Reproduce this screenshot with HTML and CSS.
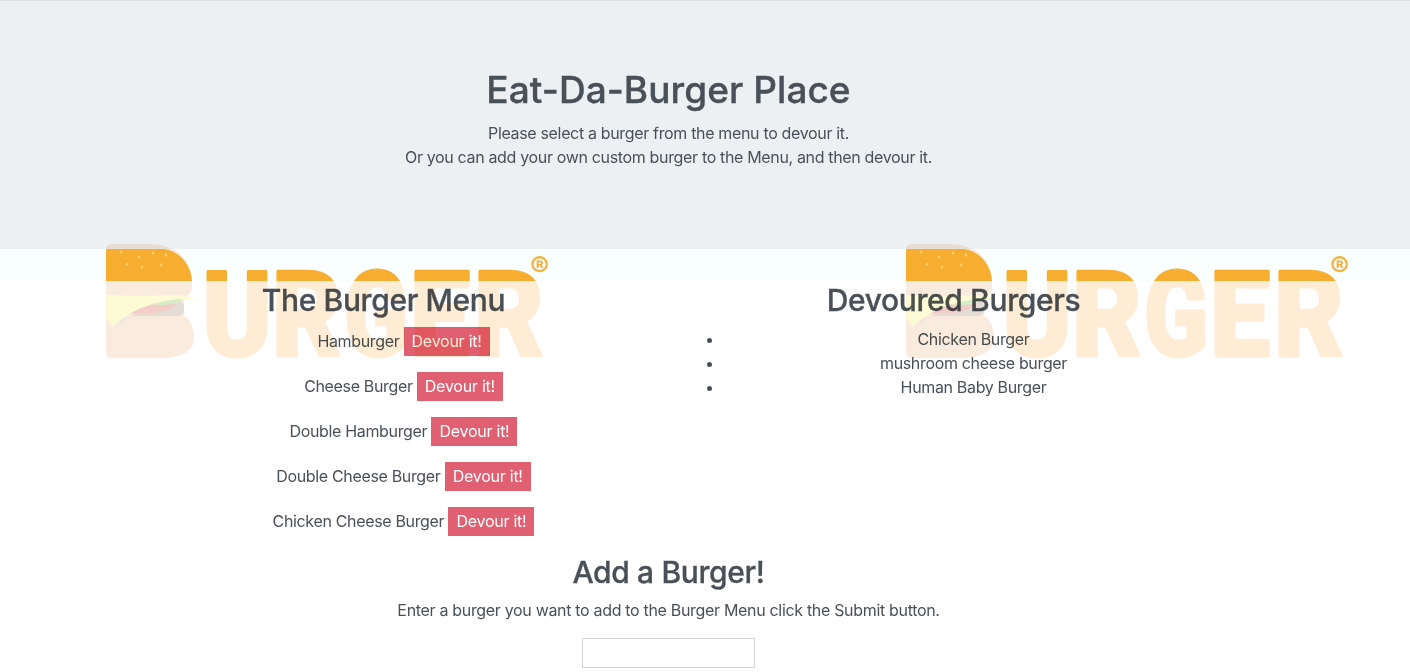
FILE: index.html
```html
<!DOCTYPE html>
<html lang="en">
<head>
<meta charset="utf-8">
<title>Eat-Da-Burger Place</title>
<link rel="stylesheet" href="styles.css">
</head>
<body>
<header class="hero">
  <div class="shell">
    <h1>Eat-Da-Burger Place</h1>
    <p>Please select a burger from the menu to devour it.<br>Or you can add your own custom burger to the Menu, and then devour it.</p>
  </div>
</header>
<main class="content">
  <div class="shell">
    <div class="container">
      <div class="columns">
        <section class="col">
          <h2>The Burger Menu</h2>
          <ul class="menu">
            <li>Hamburger <button class="devour">Devour it!</button></li>
            <li>Cheese Burger <button class="devour">Devour it!</button></li>
            <li>Double Hamburger <button class="devour">Devour it!</button></li>
            <li>Double Cheese Burger <button class="devour">Devour it!</button></li>
            <li>Chicken Cheese Burger <button class="devour">Devour it!</button></li>
          </ul>
        </section>
        <section class="col">
          <h2>Devoured Burgers</h2>
          <ul class="eaten">
            <li>Chicken Burger</li>
            <li>mushroom cheese burger</li>
            <li>Human Baby Burger</li>
          </ul>
        </section>
      </div>
      <section class="add">
        <h2 class="add-title">Add a Burger!</h2>
        <p>Enter a burger you want to add to the Burger Menu click the Submit button.</p>
        <input class="burger-input" type="text" aria-label="Burger name">
      </section>
    </div>
  </div>
</main>
<svg class="logos" viewBox="0 0 1410 672" aria-hidden="true">
  <defs>
    <linearGradient id="wordFill" gradientUnits="userSpaceOnUse" x1="0" y1="244" x2="0" y2="360">
      <stop offset="0.319" stop-color="#fdad30"/>
      <stop offset="0.319" stop-color="#ffecd5"/>
    </linearGradient>
  </defs>
  <g id="logo">
    <path class="pale-bun" d="M106 250Q106 244 112 244H150C176 244 192 260 192 281V288Q192 295 184 297L184 316C192 320 194 330 194 338C194 350 184 358 160 358H112Q106 358 106 352Z"/>
    <path class="bun-top" d="M106 249H164C180 251 191 265 192 281H106Z"/>
    <path class="patty" d="M118 324C136 312 160 303 176 300Q184 300 184 308V310Q184 316 176 316H136Q126 316 118 324Z"/>
    <path class="tomato" d="M128 313C146 303 166 302 176 304C172 311 148 316 128 313Z"/>
    <path class="lettuce" d="M152 304C162 296 176 297 182 300C174 305 164 306 152 304Z"/>
    <path class="cheese" d="M106 295C140 297 176 294 186 296L197 299.500L178 299C150 302 130 312 120 320L113 327L106 319Z"/>
    <g class="seeds">
      <circle cx="121" cy="252" r="1.5"/><circle cx="139" cy="257" r="1.5"/><circle cx="153" cy="253" r="1.5"/>
      <circle cx="166" cy="255" r="1.5"/><circle cx="127" cy="264" r="1.5"/><circle cx="142" cy="267" r="1.5"/>
      <circle cx="161" cy="265" r="1.5"/>
    </g>
    <g class="word">
      <text x="202.500" y="356" textLength="69" lengthAdjust="spacingAndGlyphs">U</text>
      <text x="272" y="356" textLength="70" lengthAdjust="spacingAndGlyphs">R</text>
      <text x="344" y="356" textLength="64" lengthAdjust="spacingAndGlyphs">G</text>
      <text x="410" y="356" textLength="60" lengthAdjust="spacingAndGlyphs">E</text>
      <text x="474" y="356" textLength="70" lengthAdjust="spacingAndGlyphs">R</text>
    </g>
    <text class="reg" x="530" y="277">®</text>
  </g>
  <use href="#logo" x="800"/>
</svg>
</body>
</html>
```
FILE: styles.css
```css
* { box-sizing: border-box; }

html, body { margin: 0; height: 672px; overflow: hidden; }

body {
  position: relative;
  background: #f8fffe;
  color: #495057;
  font-family: Inter, "Liberation Sans", sans-serif;
  font-size: 16px;
  line-height: 24px;
  letter-spacing: -0.34px;
}

.shell { width: 1337px; }

.hero {
  background: #edf0f3;
  border-top: 1px solid #dcdfe2;
  height: 249px;
  margin-bottom: 32px;
  padding-top: 65px;
  text-align: center;
}

h1 {
  margin: 0 0 7px;
  font-size: 37px;
  font-weight: 500;
  line-height: 48px;
  letter-spacing: 0.05px;
  -webkit-text-stroke: 0.35px #495057;
}

.hero p { margin: 0; }

.content { background: #fff; height: 391px; }

.container { width: 1140px; margin: 0 auto; padding: 0 15px; }

.columns { display: grid; grid-template-columns: 1fr 1fr; column-gap: 30px; }

h2 {
  margin: 0 0 8px;
  font-size: 30px;
  font-weight: 500;
  line-height: 38px;
  letter-spacing: -0.37px;
  text-align: center;
  -webkit-text-stroke: 0.3px #495057;
}

.col ul { margin: 0; padding: 0 0 0 40px; text-align: center; }

.menu { list-style: none; }

.menu li { margin-bottom: 16px; height: 29px; line-height: 29px; }

.devour {
  height: 29px;
  padding: 0 8px;
  border: 0;
  background: #e05f70;
  color: #fff;
  font: inherit;
  letter-spacing: -0.25px;
  vertical-align: top;
}

.add { text-align: center; margin-top: 1px; }

.add-title { margin-bottom: 7px; }

.add p { margin: 0 0 16px; letter-spacing: -0.32px; }

.burger-input {
  display: block;
  width: 173px;
  height: 30px;
  margin: 0 auto;
  border: 1px solid #d4d4d4;
  background: #fff;
}

.logos {
  position: absolute;
  top: 0;
  left: 0;
  width: 1410px;
  height: 672px;
  mix-blend-mode: multiply;
  pointer-events: none;
}

.pale-bun { fill: #f9ebdd; }
.bun-top { fill: #fdad30; }
.patty { fill: #e4ddd4; }
.tomato { fill: #f3cdc8; }
.lettuce { fill: #d6edc8; }
.cheese { fill: #fdfbd6; }
.seeds { fill: #fdd067; }

.word text {
  font-family: Roboto, sans-serif;
  font-size: 118px;
  font-weight: 900;
  letter-spacing: 0;
  fill: url(#wordFill);
  stroke: url(#wordFill);
  stroke-width: 3px;
  stroke-linejoin: round;
}

.reg {
  font-family: Inter, sans-serif;
  font-size: 29px;
  font-weight: 700;
  letter-spacing: 0;
  fill: #fbb03b;
}
```
